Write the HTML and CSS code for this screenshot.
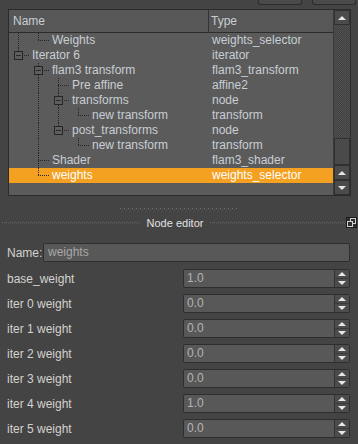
FILE: index.html
```html
<!DOCTYPE html>
<html lang="en">
<head>
  <meta charset="UTF-8">
  <title>Node editor</title>
  <link rel="stylesheet" href="styles.css">
</head>
<body>
  <div class="app">
    <div class="topbar">
      <span class="tbtn"></span>
      <span class="tbtn"></span>
    </div>

    <div class="tree">
      <div class="tree-main">
        <div class="tree-header">
          <div class="col-name">Name</div>
          <div class="col-type">Type</div>
        </div>

        <div class="row">
          <div class="name"><span class="c v"></span><span class="c l"></span><span class="label">Weights</span></div>
          <div class="type">weights_selector</div>
        </div>
        <div class="row">
          <div class="name"><span class="c l"><i class="box"></i></span><span class="label">Iterator 6</span></div>
          <div class="type">iterator</div>
        </div>
        <div class="row">
          <div class="name"><span class="c"></span><span class="c t"><i class="box"></i></span><span class="label">flam3 transform</span></div>
          <div class="type">flam3_transform</div>
        </div>
        <div class="row">
          <div class="name"><span class="c"></span><span class="c v"></span><span class="c t"></span><span class="label">Pre affine</span></div>
          <div class="type">affine2</div>
        </div>
        <div class="row">
          <div class="name"><span class="c"></span><span class="c v"></span><span class="c t"><i class="box"></i></span><span class="label">transforms</span></div>
          <div class="type">node</div>
        </div>
        <div class="row">
          <div class="name"><span class="c"></span><span class="c v"></span><span class="c v"></span><span class="c l"></span><span class="label">new transform</span></div>
          <div class="type">transform</div>
        </div>
        <div class="row">
          <div class="name"><span class="c"></span><span class="c v"></span><span class="c l"><i class="box"></i></span><span class="label">post_transforms</span></div>
          <div class="type">node</div>
        </div>
        <div class="row">
          <div class="name"><span class="c"></span><span class="c v"></span><span class="c"></span><span class="c l"></span><span class="label">new transform</span></div>
          <div class="type">transform</div>
        </div>
        <div class="row">
          <div class="name"><span class="c"></span><span class="c t"></span><span class="label">Shader</span></div>
          <div class="type">flam3_shader</div>
        </div>
        <div class="row selected">
          <div class="name"><span class="c"></span><span class="c l"></span><span class="label">weights</span></div>
          <div class="type">weights_selector</div>
        </div>
      </div>

      <div class="vscroll">
        <div class="sb-btn"><i class="arrow up"></i></div>
        <div class="sb-track"></div>
        <div class="sb-handle"></div>
        <div class="sb-btn"><i class="arrow up"></i></div>
        <div class="sb-btn"><i class="arrow down"></i></div>
      </div>
    </div>

    <div class="splitter"><span class="grip"></span></div>

    <div class="dock-title">
      <span class="grip left"></span>
      <span class="title">Node editor</span>
      <span class="grip right"></span>
      <svg class="float-btn" width="11" height="11" viewBox="0 0 11 11">
        <rect x="0.5" y="0.5" width="10" height="10" fill="#2e2e2e" stroke="#1c1c1c"/>
        <rect x="4.5" y="1.5" width="5" height="5" fill="none" stroke="#d0d0d0"/>
        <rect x="1.5" y="4.5" width="5" height="5" fill="#2e2e2e" stroke="#d0d0d0"/>
      </svg>
    </div>

    <div class="editor">
      <div class="name-row">
        <label>Name:</label>
        <div class="line-edit">weights</div>
      </div>

      <div class="field">
        <label>base_weight</label>
        <div class="spin"><span class="val">1.0</span><span class="spin-btns"><b><i class="arrow up"></i></b><b><i class="arrow down"></i></b></span></div>
      </div>
      <div class="field">
        <label>iter 0 weight</label>
        <div class="spin"><span class="val">0.0</span><span class="spin-btns"><b><i class="arrow up"></i></b><b><i class="arrow down"></i></b></span></div>
      </div>
      <div class="field">
        <label>iter 1 weight</label>
        <div class="spin"><span class="val">0.0</span><span class="spin-btns"><b><i class="arrow up"></i></b><b><i class="arrow down"></i></b></span></div>
      </div>
      <div class="field">
        <label>iter 2 weight</label>
        <div class="spin"><span class="val">0.0</span><span class="spin-btns"><b><i class="arrow up"></i></b><b><i class="arrow down"></i></b></span></div>
      </div>
      <div class="field">
        <label>iter 3 weight</label>
        <div class="spin"><span class="val">0.0</span><span class="spin-btns"><b><i class="arrow up"></i></b><b><i class="arrow down"></i></b></span></div>
      </div>
      <div class="field">
        <label>iter 4 weight</label>
        <div class="spin"><span class="val">1.0</span><span class="spin-btns"><b><i class="arrow up"></i></b><b><i class="arrow down"></i></b></span></div>
      </div>
      <div class="field">
        <label>iter 5 weight</label>
        <div class="spin"><span class="val">0.0</span><span class="spin-btns"><b><i class="arrow up"></i></b><b><i class="arrow down"></i></b></span></div>
      </div>
    </div>
  </div>
</body>
</html>
```

FILE: styles.css
```css
* {
  box-sizing: border-box;
}

body {
  margin: 0;
  background-color: #444;
  font-family: 'Liberation Sans', Arial, sans-serif;
  font-size: 12px;
  color: #c8ced4;
}

.app {
  width: 358px;
  height: 444px;
  overflow: hidden;
  background-color: #444;
  --vd: repeating-linear-gradient(to bottom, #262626 0 1px, transparent 1px 2px);
  --hd: repeating-linear-gradient(to right, #262626 0 1px, transparent 1px 2px);
}

/* top strip with the cut-off buttons */
.topbar {
  height: 9px;
  display: flex;
  justify-content: flex-end;
  gap: 10px;
  padding-right: 2px;
}

.tbtn {
  width: 44px;
  height: 5px;
  border: 1px solid #2c2c2c;
  border-top: none;
  border-radius: 0 0 3px 3px;
  background-color: #4a4a4a;
}

/* Tree view */
.tree {
  margin-left: 8px;
  width: 343px;
  height: 187px;
  border: 1px solid #2b2b2b;
  display: flex;
  background-color: #5b5b5b;
}

.tree-main {
  width: 324px;
}

.tree-header {
  display: flex;
  height: 23px;
  line-height: 22px;
  border-bottom: 1px solid #2d2d2d;
  background-color: #575757;
}

.col-name {
  width: 200px;
  padding-left: 4px;
  border-right: 1px solid #333;
}

.col-type {
  flex: 1;
  padding-left: 2px;
}

.row {
  display: flex;
  height: 15px;
  line-height: 15px;
  white-space: nowrap;
}

.row .name {
  width: 200px;
  display: flex;
}

.row .type {
  flex: 1;
  padding-left: 3px;
}

.row.selected {
  background-color: #f4a020;
  color: #fff;
}

.row .label {
  padding-left: 3px;
}

.c {
  width: 20px;
  height: 15px;
  flex: none;
  display: flex;
  align-items: center;
  background-repeat: no-repeat;
}

.c.v {
  background-image: var(--vd);
  background-size: 1px 15px;
  background-position: 9px 0;
}

.c.t {
  background-image: var(--vd), var(--hd);
  background-size: 1px 15px, 11px 1px;
  background-position: 9px 0, 9px 7px;
}

.c.l {
  background-image: var(--vd), var(--hd);
  background-size: 1px 8px, 11px 1px;
  background-position: 9px 0, 9px 7px;
}

.box {
  width: 9px;
  height: 9px;
  margin-left: 5px;
  border: 1px solid #262626;
  background-color: #5e5e5e;
  display: flex;
  align-items: center;
  justify-content: center;
}

.box::after {
  content: '';
  width: 5px;
  height: 1px;
  background-color: #2a2a2a;
}

/* scrollbar */
.vscroll {
  width: 17px;
  display: flex;
  flex-direction: column;
  border-left: 1px solid #3a3a3a;
  background-color: #444;
}

.sb-btn {
  height: 15px;
  border: 1px solid #303030;
  background-color: #4b4b4b;
  display: flex;
  align-items: center;
  justify-content: center;
}

.sb-track {
  flex: 1;
  background: repeating-conic-gradient(#545454 0 25%, #3d3d3d 0 50%) 0 0 / 2px 2px;
}

.sb-handle {
  height: 27px;
  border: 1px solid #303030;
  background-color: #4a4a4a;
}

.arrow {
  width: 0;
  height: 0;
  border-left: 4px solid transparent;
  border-right: 4px solid transparent;
}

.arrow.up {
  border-bottom: 4px solid #e6e6e6;
}

.arrow.down {
  border-top: 4px solid #e6e6e6;
}

/* splitter + dock title */
.grip {
  display: block;
  height: 2px;
  background-image:
    linear-gradient(90deg, #727272 1px, transparent 1px),
    linear-gradient(90deg, #5c5c5c 1px, transparent 1px);
  background-size: 4px 1px, 4px 1px;
  background-position: 0 0, 2px 1px;
  background-repeat: repeat-x;
}

.splitter {
  height: 16px;
  padding-top: 12px;
  display: flex;
  justify-content: center;
}

.splitter .grip {
  width: 118px;
}

.dock-title {
  height: 22px;
  display: flex;
  align-items: center;
  padding-left: 2px;
}

.dock-title .grip.left {
  width: 138px;
}

.dock-title .grip.right {
  width: 135px;
}

.dock-title .title {
  width: 70px;
  text-align: center;
  font-size: 11px;
  color: #e2e2e2;
}

.float-btn {
  margin-left: 1px;
  margin-top: -1px;
}

/* node editor form */
.editor {
  padding: 9px 8px 0 7px;
  display: flex;
  flex-direction: column;
  gap: 6px;
  color: #d4d2ce;
}

.name-row,
.field {
  display: flex;
  align-items: center;
  height: 19px;
}

.name-row {
  margin-bottom: 1px;
}

.name-row label {
  width: 36px;
}

.field label {
  width: 176px;
}

.line-edit,
.spin {
  flex: 1;
  height: 19px;
  border: 1px solid #2e2e2e;
  border-radius: 2px;
  background-color: #585858;
  color: #a8a8a8;
  line-height: 17px;
}

.line-edit {
  padding-left: 4px;
}

.spin {
  display: flex;
  color: #b4b4b4;
}

.spin .val {
  flex: 1;
  padding-left: 3px;
}

.spin-btns {
  width: 15px;
  display: flex;
  flex-direction: column;
  border-left: 1px solid #333;
  background-color: #4c4c4c;
}

.spin-btns b {
  flex: 1;
  display: flex;
  align-items: center;
  justify-content: center;
}

.spin-btns b + b {
  border-top: 1px solid #3a3a3a;
}
```
